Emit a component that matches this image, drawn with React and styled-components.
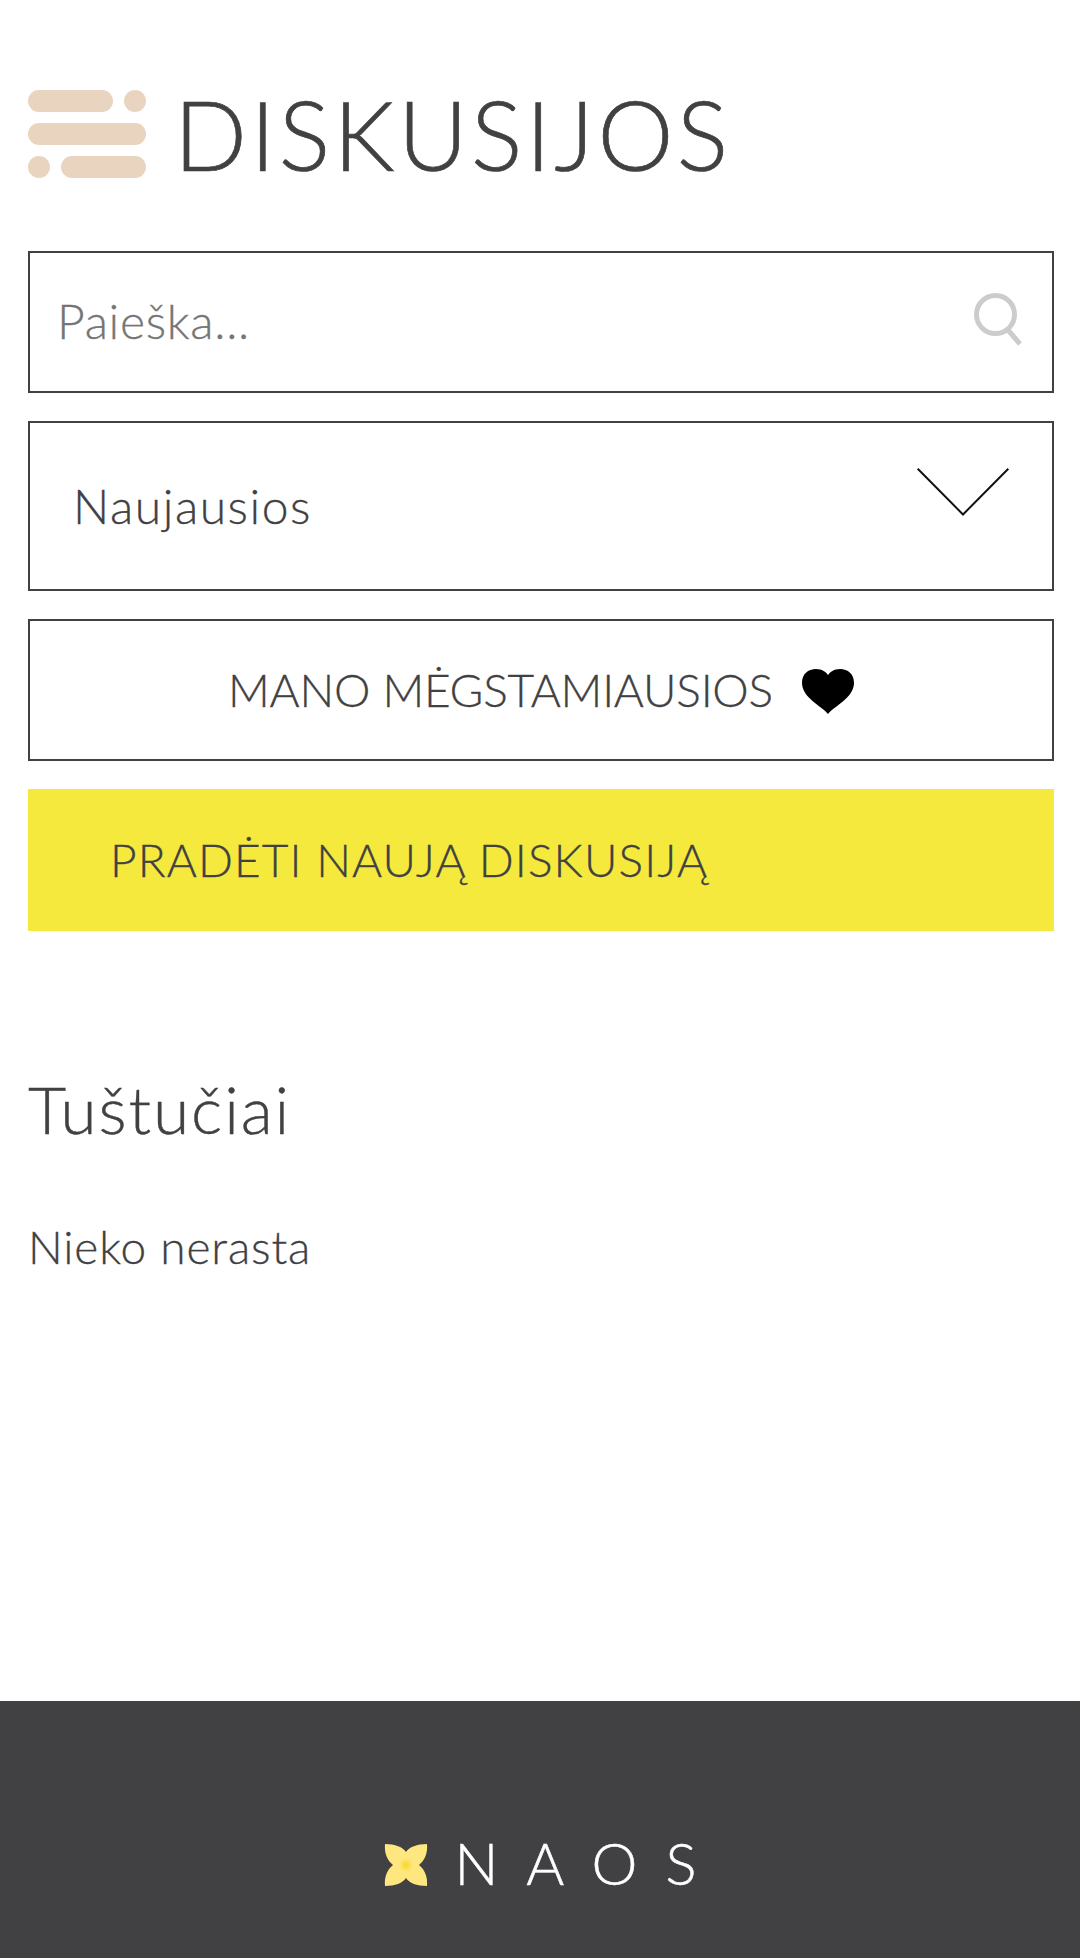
import React from "react";
import styled, { createGlobalStyle } from "styled-components";

const Global = createGlobalStyle`
  html, body { margin: 0; padding: 0; background: #fff; }
  body { font-family: "Lato", "Noto Sans", sans-serif; color: #414042; }
`;
const Page = styled.div`
  width: 1080px;
  height: 1958px;
  display: flex;
  flex-direction: column;
  overflow: hidden;
`;
const Main = styled.main`
  flex: 1;
  padding: 90px 26px 0 28px;
  display: flex;
  flex-direction: column;
`;
const Header = styled.header`
  display: flex;
  align-items: center;
  gap: 28px;
  height: 88px;
  margin-bottom: 73px;
`;
const Title = styled.h1`
  margin: 0;
  font-size: 96px;
  font-weight: 300;
  line-height: 88px;
  letter-spacing: 3.4px;
  -webkit-text-stroke: 0.7px #414042;
  color: #414042;
`;
const Controls = styled.div`
  display: flex;
  flex-direction: column;
  gap: 28px;
`;
const Box = styled.div`
  box-sizing: border-box;
  height: ${p => p.$h || 142}px;
  border: 2px solid #414042;
  display: flex;
  align-items: center;
`;
const SearchBox = styled(Box)`
  justify-content: space-between;
  padding: 0 30px 0 27px;
`;
const Placeholder = styled.span`
  font-size: 48px;
  font-weight: 300;
  letter-spacing: 0.7px;
  margin-bottom: 3px;
  color: #757575;
  -webkit-text-stroke: 0.3px #757575;
`;
const SelectBox = styled(Box)`
  justify-content: space-between;
  padding: 0 43px 0 43px;
`;
const SelectLabel = styled.span`
  font-size: 48px;
  font-weight: 300;
  letter-spacing: 1.55px;
  margin-bottom: 2px;
  color: #414042;
  -webkit-text-stroke: 0.3px #414042;
`;
const FavButton = styled(Box)`
  justify-content: center;
  gap: 29px;
`;
const ButtonLabel = styled.span`
  font-size: 46px;
  font-weight: 300;
  letter-spacing: ${p => p.$spacing}px;
  margin-bottom: 2px;
  color: #414042;
  -webkit-text-stroke: 0.3px #414042;
  white-space: nowrap;
`;
const StartButton = styled.div`
  box-sizing: border-box;
  height: 142px;
  background: #f4e93c;
  display: flex;
  align-items: center;
  padding-left: 82px;
`;
const Empty = styled.section`
  margin-top: 140px;
`;
const EmptyTitle = styled.h2`
  margin: 0;
  font-size: 66px;
  font-weight: 300;
  line-height: 76px;
  letter-spacing: 1.9px;
  color: #414042;
  -webkit-text-stroke: 0.4px #414042;
`;
const EmptyText = styled.p`
  margin: 72px 0 0;
  font-size: 46px;
  font-weight: 300;
  line-height: 56px;
  letter-spacing: 0.85px;
  color: #414042;
  -webkit-text-stroke: 0.3px #414042;
`;
const Footer = styled.footer`
  height: 257px;
  background: #414042;
  display: flex;
  align-items: flex-start;
  justify-content: center;
  padding-top: 142px;
  box-sizing: border-box;
  gap: 27px;
`;
const Brand = styled.span`
  font-size: 58px;
  font-weight: 300;
  line-height: 40px;
  letter-spacing: 28px;
  margin-right: -28px;
  color: #fff;
  -webkit-text-stroke: 0.5px #fff;
`;

const BarsIcon = () => (
  <svg width="118" height="88" viewBox="0 0 118 88" style={{ flex: "none" }}>
    <g fill="#e9d4c0">
      <rect x="0" y="0" width="85" height="22" rx="11" />
      <rect x="96" y="0" width="22" height="22" rx="11" />
      <rect x="0" y="33" width="118" height="22" rx="11" />
      <rect x="0" y="66" width="22" height="22" rx="11" />
      <rect x="33" y="66" width="85" height="22" rx="11" />
    </g>
  </svg>
);
const SearchIcon = () => (
  <svg width="48" height="53" viewBox="0 0 48 53" fill="none" stroke="#cccccc" strokeWidth="5" style={{ marginBottom: 5 }}>
    <circle cx="21.5" cy="21.5" r="19" />
    <path d="M34 37 L46 51" />
  </svg>
);
const Chevron = () => (
  <svg width="92" height="48" viewBox="0 0 92 48" fill="none" stroke="#111" strokeWidth="2" style={{ marginBottom: 28 }}>
    <path d="M0.7 0.7 L46 46.5 L91.3 0.7" />
  </svg>
);
const Heart = () => (
  <svg width="52" height="45" viewBox="0 0 52 45" style={{ marginTop: 2 }}>
    <path fill="#000" d="M26 45 C21 38 0 29 0 14 C0 5 6 0 14 0 C20 0 24 3 26 6 C28 3 32 0 38 0 C46 0 52 5 52 14 C52 29 31 38 26 45Z" />
  </svg>
);
const Flower = () => (
  <svg width="44" height="44" viewBox="0 0 44 44">
    <defs>
      <radialGradient id="fc">
        <stop offset="0" stopColor="#f8d823" />
        <stop offset="1" stopColor="#fde77e" />
      </radialGradient>
    </defs>
    <path fill="#fde77e" d="M22 9 C19 4 11 1 1 1 C0 11 4 18 9 22 C4 26 0 33 1 43 C11 43 19 40 22 35 C25 40 33 43 43 43 C44 33 40 26 35 22 C40 18 44 11 43 1 C33 1 25 4 22 9Z" />
    <circle cx="22" cy="22" r="7" fill="url(#fc)" />
  </svg>
);

export default function App() {
  return (
    <Page>
      <Global />
      <Main>
        <Header>
          <BarsIcon />
          <Title>DISKUSIJOS</Title>
        </Header>
        <Controls>
          <SearchBox>
            <Placeholder>Paieška...</Placeholder>
            <SearchIcon />
          </SearchBox>
          <SelectBox $h={170}>
            <SelectLabel>Naujausios</SelectLabel>
            <Chevron />
          </SelectBox>
          <FavButton>
            <ButtonLabel $spacing={-0.25}>MANO MĖGSTAMIAUSIOS</ButtonLabel>
            <Heart />
          </FavButton>
          <StartButton>
            <ButtonLabel $spacing={1.1}>PRADĖTI NAUJĄ DISKUSIJĄ</ButtonLabel>
          </StartButton>
        </Controls>
        <Empty>
          <EmptyTitle>Tuštučiai</EmptyTitle>
          <EmptyText>Nieko nerasta</EmptyText>
        </Empty>
      </Main>
      <Footer>
        <Flower />
        <Brand>NAOS</Brand>
      </Footer>
    </Page>
  );
}
